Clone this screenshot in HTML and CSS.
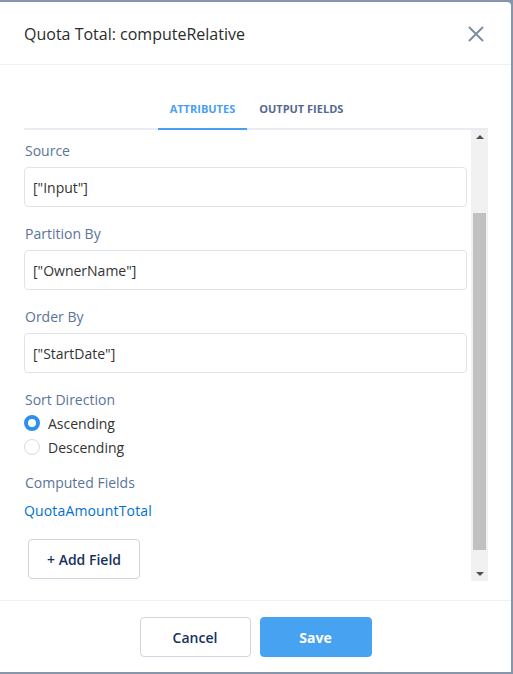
FILE: index.html
```html
<!DOCTYPE html>
<html>
<head>
<meta charset="utf-8">
<link rel="stylesheet" href="styles.css">
</head>
<body>
<div class="modal">
  <div class="header">
    <h2 class="title">Quota Total: computeRelative</h2>
    <button class="close" aria-label="Close">
      <svg width="16" height="16" viewBox="0 0 16 16"><path d="M1.5 1.5 L14.5 14.5 M14.5 1.5 L1.5 14.5" stroke="#7b8ea6" stroke-width="2" stroke-linecap="round" fill="none"/></svg>
    </button>
  </div>
  <div class="body">
    <div class="tabs">
      <div class="tab active">Attributes</div>
      <div class="tab">Output Fields</div>
    </div>
    <div class="scroll">
      <div class="content">
        <div class="field">
          <div class="label">Source</div>
          <div class="input">["Input"]</div>
        </div>
        <div class="field">
          <div class="label">Partition By</div>
          <div class="input">["OwnerName"]</div>
        </div>
        <div class="field">
          <div class="label">Order By</div>
          <div class="input">["StartDate"]</div>
        </div>
        <div class="group">
          <div class="label">Sort Direction</div>
          <div class="radio"><span class="dot checked"></span><span>Ascending</span></div>
          <div class="radio"><span class="dot"></span><span>Descending</span></div>
        </div>
        <div class="group computed">
          <div class="label">Computed Fields</div>
          <div class="link">QuotaAmountTotal</div>
        </div>
        <button class="btn add">+ Add Field</button>
      </div>
      <div class="scrollbar">
        <div class="arrow"><span class="tri up"></span></div>
        <div class="track">
          <div class="thumb"></div>
        </div>
        <div class="arrow"><span class="tri down"></span></div>
      </div>
    </div>
  </div>
  <div class="footer">
    <button class="btn cancel">Cancel</button>
    <button class="btn save">Save</button>
  </div>
</div>
</body>
</html>
```
FILE: styles.css
```css
* { box-sizing: border-box; }
html, body { margin: 0; padding: 0; }
body {
  background: #8796ab;
  font-family: "Open Sans", "Noto Sans", sans-serif;
  width: 513px;
  height: 674px;
  overflow: hidden;
}
.modal {
  width: 511px;
  height: 670px;
  margin: 2px 2px 2px 0;
  background: #fff;
  border-top-right-radius: 4px;
  display: flex;
  flex-direction: column;
}
.header {
  height: 63px;
  border-bottom: 1px solid #eef1f6;
  display: flex;
  align-items: center;
  justify-content: space-between;
  padding: 0 27px 0 24px;
}
.title {
  margin: 0;
  font-size: 16px;
  font-weight: 400;
  color: #2b2b2b;
  padding-top: 1px;
}
.close {
  border: 0;
  background: none;
  padding: 0;
  width: 16px;
  height: 16px;
  display: flex;
  margin-top: 1px;
}
.body {
  height: 535px;
  padding: 29px 23px 0 24px;
}
.tabs {
  height: 36px;
  display: flex;
  justify-content: center;
  box-shadow: inset 0 -2px 0 #e9edf3;
  padding-left: 1px;
}
.tab {
  padding: 0 12px;
  line-height: 30px;
  height: 36px;
  padding-bottom: 4px;
  border-bottom: 2px solid transparent;
  font-size: 11px;
  font-weight: 700;
  text-transform: uppercase;
  color: #54698d;
}
.tab.active {
  color: #4a9ff0;
  border-bottom-color: #4a9ff0;
}
.scroll {
  height: 451px;
  display: flex;
  overflow: hidden;
}
.content {
  flex: 1;
  padding: 11px 4px 0 0;
  overflow: hidden;
}
.label {
  font-size: 14px;
  line-height: 20px;
  color: #5b749a;
  padding-left: 1px;
}
.field { margin-bottom: 17px; }
.field .label { margin-bottom: 6px; }
.input {
  height: 40px;
  border: 1px solid #dfe4ea;
  border-radius: 4px;
  padding: 0 8px;
  display: flex;
  align-items: center;
  font-size: 14px;
  color: #333;
}
.group { margin-bottom: 0; }
.radio {
  display: flex;
  align-items: center;
  gap: 8px;
  height: 24px;
  font-size: 14px;
  color: #333;
}
.group .label { margin-bottom: 1px; }
.dot {
  width: 16px;
  height: 16px;
  border-radius: 50%;
  border: 1px solid #d3dbe4;
  background: #fff;
}
.dot.checked {
  border: 4.5px solid #2e90ee;
}
.computed { margin-top: 14px; }
.computed .label { margin-bottom: 8px; }
.link {
  font-size: 14px;
  line-height: 20px;
  color: #0070d2;
  letter-spacing: 0.15px;
}
.btn {
  font-family: "Open Sans", "Noto Sans", sans-serif;
  font-size: 14px;
  height: 40px;
  border-radius: 4px;
  background: #fff;
  border: 1px solid #cdd6e0;
  color: #16325c;
  font-weight: 600;
  padding: 0;
}
.add {
  margin: 18px 0 0 4px;
  width: 112px;
}
.scrollbar {
  width: 17px;
  background: #f1f1f1;
  display: flex;
  flex-direction: column;
}
.arrow {
  height: 17px;
  display: flex;
  align-items: center;
  justify-content: center;
}
.tri {
  width: 0;
  height: 0;
  border-left: 4px solid transparent;
  border-right: 4px solid transparent;
}
.tri.up { border-bottom: 4px solid #505050; margin-top: -3px; }
.tri.down { border-top: 4px solid #505050; margin-top: 2px; }
.track {
  flex: 1;
  padding: 66px 2px 14px 2px;
  display: flex;
}
.thumb {
  flex: 1;
  background: #c1c1c1;
}
.footer {
  height: 72px;
  border-top: 1px solid #eef1f6;
  display: flex;
  justify-content: center;
  gap: 9px;
  padding-top: 16px;
}
.cancel { width: 111px; }
.save {
  width: 112px;
  background: #47a3f2;
  border-color: #47a3f2;
  color: #fff;
  font-weight: 700;
}
```
